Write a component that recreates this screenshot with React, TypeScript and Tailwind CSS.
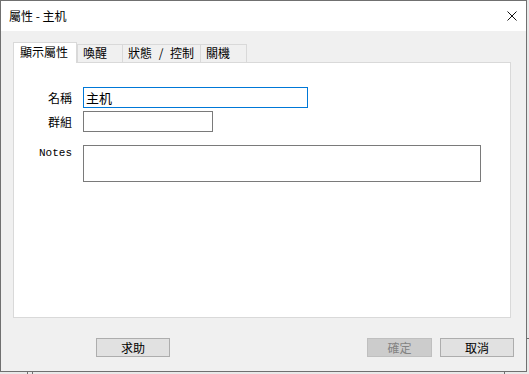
const cjk = { fontFamily: '"Noto Sans CJK TC", "Noto Sans CJK SC", sans-serif' };

const tabs = [
    { label: '喚醒', w: 'w-[46px]' },
    { label: '狀態 / 控制', w: 'w-[79px]' },
    { label: '關機', w: 'w-[47px]' },
];

const App = () => {
    return (
        <div className="relative h-[374px] w-[529px] overflow-hidden bg-[#e9e9e9] text-black" style={cjk}>
            {/* window */}
            <div className="flex h-[372px] w-[527px] flex-col border border-[#707070] bg-[#f0f0f0]">
                {/* title bar */}
                <div className="flex h-[30px] shrink-0 items-center justify-between bg-white pl-[8px] pr-[9px]">
                    <span className="text-[12px] leading-none">屬性 - 主机</span>
                    <svg width="10" height="10" viewBox="0 0 10 10" className="shrink-0">
                        <path d="M0.5 0.5 L9.5 9.5 M9.5 0.5 L0.5 9.5" stroke="#111" strokeWidth="1" />
                    </svg>
                </div>

                <div className="flex flex-1 flex-col pl-[12px] pt-[11px]">
                    {/* tabs */}
                    <div className="flex h-[20px] items-end">
                        <div className="relative z-10 -mb-px flex h-[21px] w-[64px] items-start border border-b-0 border-[#d9d9d9] bg-white pl-[6px] pt-[2px] text-[12px] leading-[14px]">
                            顯示屬性
                        </div>
                        {tabs.map((t, i) => (
                            <div
                                key={t.label}
                                className={`flex h-[18px] ${t.w} ${i === 0 ? '' : '-ml-px'} items-start border border-b-0 border-[#d9d9d9] bg-[#f0f0f0] pl-[5px] pt-[1px] text-[12px] leading-[14px] whitespace-pre [word-spacing:4px]`}
                            >
                                {t.label}
                            </div>
                        ))}
                    </div>

                    {/* panel */}
                    <div className="h-[256px] w-[498px] border border-[#d9d9d9] bg-white pt-[24px]">
                        <div className="grid grid-cols-[58px_auto] items-start gap-x-[11px] text-[12px]">
                            <div className="flex h-[21px] items-center justify-end">名稱</div>
                            <div className="flex h-[21px] w-[225px] items-center border border-[#0078d7] pl-[2px] text-[13px]">
                                主机
                            </div>
                            <div className="mt-[3px] flex h-[21px] items-center justify-end">群組</div>
                            <div className="mt-[3px] h-[21px] w-[130px] border border-[#7a7a7a]"></div>
                            <div
                                className="mt-[13px] pt-[1px] text-right text-[11px] leading-[14px]"
                                style={{ fontFamily: '"Liberation Mono", monospace' }}
                            >
                                Notes
                            </div>
                            <div className="mt-[13px] h-[37px] w-[398px] border border-[#7a7a7a]"></div>
                        </div>
                    </div>

                    {/* buttons */}
                    <div className="mt-[20px] flex pr-[12px]">
                        <button className="ml-[83px] flex h-[19px] w-[74px] items-center justify-center border border-[#adadad] bg-[#e1e1e1] text-[12px]">
                            求助
                        </button>
                        <div className="flex-1" />
                        <button
                            disabled
                            className="flex h-[19px] w-[65px] items-center justify-center border border-[#bfbfbf] bg-[#cccccc] text-[12px] text-[#838383]"
                        >
                            確定
                        </button>
                        <button className="ml-[8px] flex h-[19px] w-[74px] items-center justify-center border border-[#adadad] bg-[#e1e1e1] text-[12px]">
                            取消
                        </button>
                    </div>
                </div>
            </div>

            {/* bits of the app behind the dialog */}
            <div className="absolute left-[27px] top-[372px] h-[2px] w-px bg-[#707070]" />
            <div className="absolute left-[32px] top-[372px] h-[2px] w-px bg-[#707070]" />
            <div className="absolute left-[504px] top-[372px] h-[2px] w-px bg-[#707070]" />
            <div className="absolute left-[527px] top-[338px] h-px w-[2px] bg-[#707070]" />
        </div>
    );
};

export default App;
